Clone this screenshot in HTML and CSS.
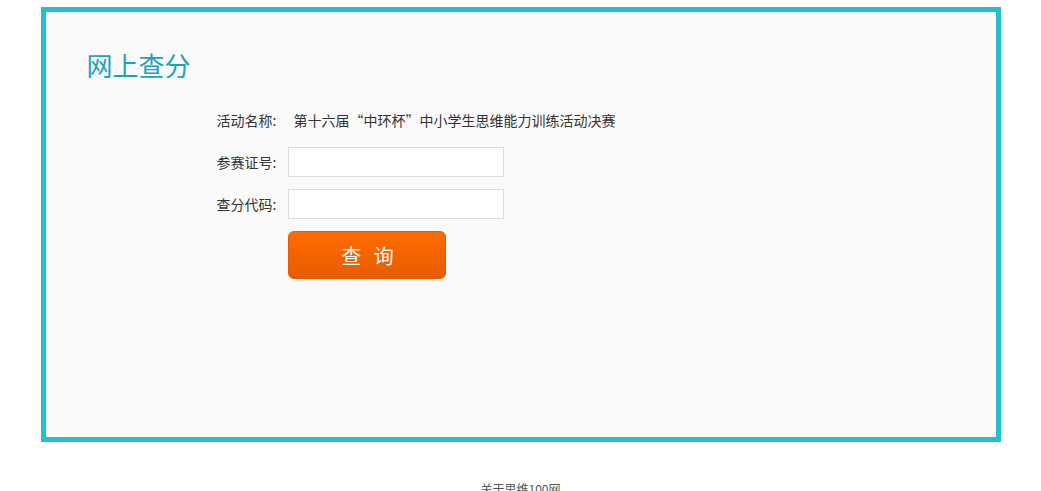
FILE: index.html
```html
<!DOCTYPE html>
<html lang="zh-CN">
<head>
  <meta charset="UTF-8">
  <title>网上查分</title>
  <link rel="stylesheet" href="styles.css">
</head>
<body>
  <div class="box">
    <h2 class="title">网上查分</h2>
    <form class="query">
      <div class="row">
        <label>活动名称:</label>
        <span class="value">第十六届“中环杯”中小学生思维能力训练活动决赛</span>
      </div>
      <div class="row">
        <label for="num">参赛证号:</label>
        <input type="text" id="num">
      </div>
      <div class="row">
        <label for="code">查分代码:</label>
        <input type="text" id="code">
      </div>
      <div class="row">
        <label></label>
        <button type="button" class="btn">查 询</button>
      </div>
    </form>
  </div>
  <div class="footer">关于思维100网</div>
</body>
</html>
```

FILE: styles.css
```css
* {
  box-sizing: border-box;
}
body {
  margin: 0;
  font-family: "Microsoft YaHei", "Noto Sans CJK SC", sans-serif;
  font-size: 14px;
  color: #333;
  background: #fff;
}
.box {
  width: 960px;
  height: 435px;
  margin: 7px auto 0;
  padding: 35px 41px;
  border: 5px solid #22bfcf;
  background: #fafafa;
}
.title {
  margin: 0;
  font-size: 26px;
  line-height: 36px;
  font-weight: normal;
  color: #1ba3b8;
}
.query {
  margin-top: 22px;
  padding-left: 121px;
}
.row {
  display: flex;
  align-items: center;
  min-height: 30px;
  margin-bottom: 12px;
}
.row label {
  width: 80px;
  flex-shrink: 0;
  padding-right: 11px;
  text-align: right;
  font-size: 14px;
}
.value {
  padding-left: 6px;
}
.row input {
  width: 216px;
  height: 30px;
  border: 1px solid #ddd;
  background: #fff;
  outline: none;
}
.btn {
  width: 158px;
  height: 48px;
  border: 1px solid #e35a00;
  border-radius: 6px;
  background: linear-gradient(#ff6c00, #e65c00);
  color: #fff;
  font-family: inherit;
  font-size: 20px;
  letter-spacing: 4px;
  padding: 0 0 0 6px;
  cursor: pointer;
}
.footer {
  margin-top: 37px;
  text-align: center;
  font-size: 12px;
  line-height: 20px;
  color: #555;
}
```
